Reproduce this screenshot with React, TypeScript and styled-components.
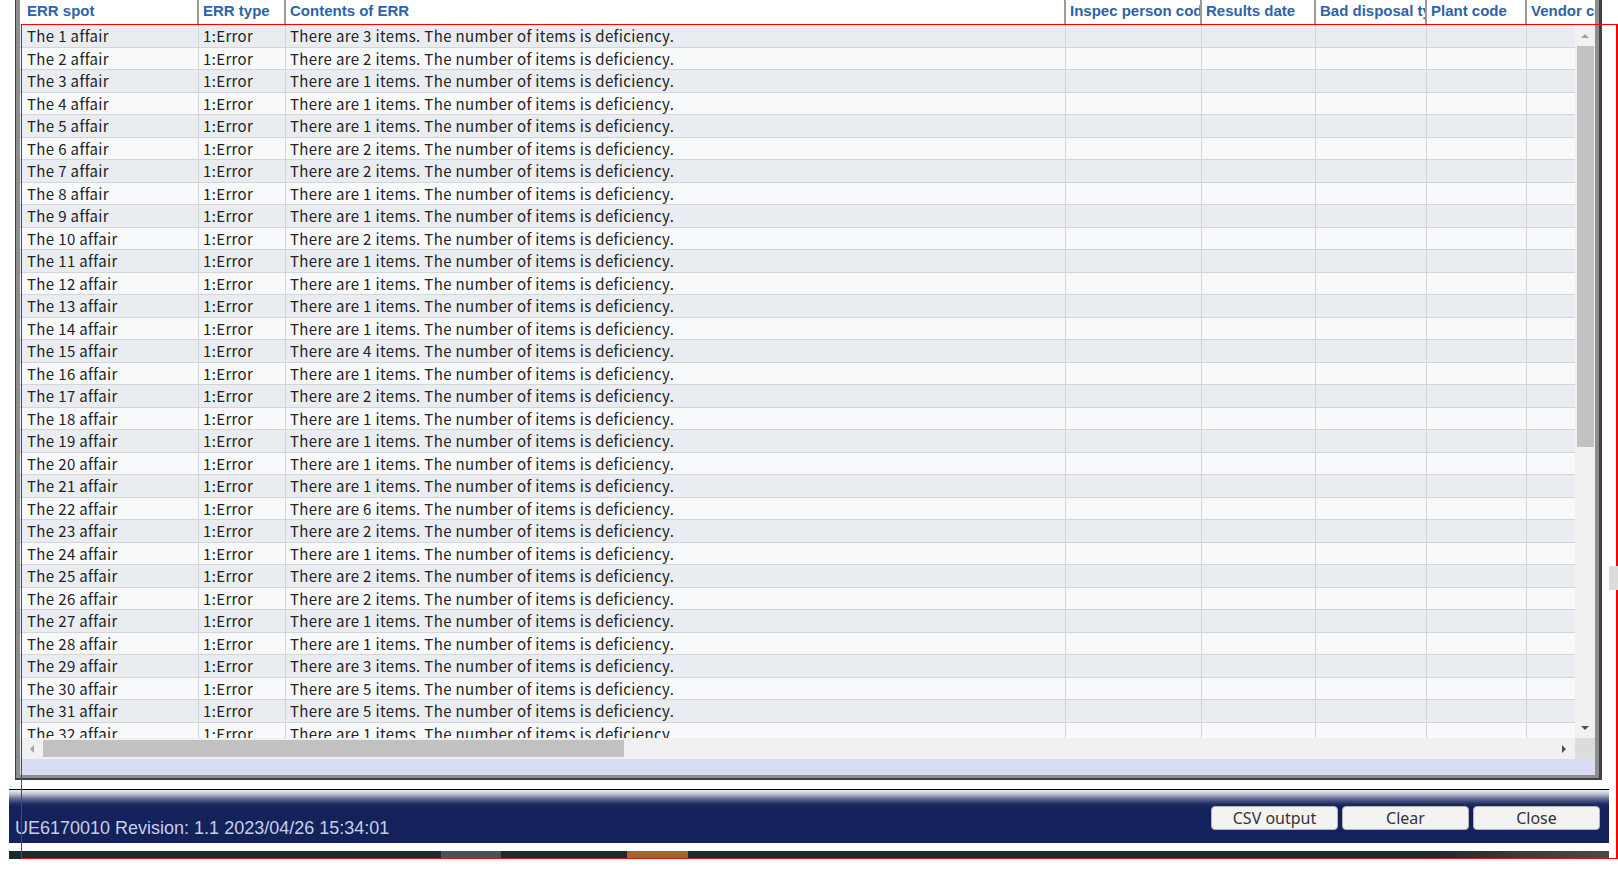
import React from 'react'
import styled, { createGlobalStyle } from 'styled-components'

const GlobalStyle = createGlobalStyle`
  html, body {
    margin: 0;
    padding: 0;
    background: #ffffff;
    overflow: hidden;
  }
`

const columns = [
  { key: 'spot', title: 'ERR spot', width: 179 },
  { key: 'type', title: 'ERR type', width: 87 },
  { key: 'contents', title: 'Contents of ERR', width: 780 },
  { key: 'inspec', title: 'Inspec person code', width: 136 },
  { key: 'results', title: 'Results date', width: 114 },
  { key: 'disposal', title: 'Bad disposal type', width: 111 },
  { key: 'plant', title: 'Plant code', width: 100 },
  { key: 'vendor', title: 'Vendor code', width: 110 },
  { key: 'extra', title: 'Item code', width: 120 },
]

// item counts of the rows that fit in the visible part of the list
const counts = [
  3, 2, 1, 1, 1, 2, 2, 1, 1, 2, 1, 1, 1, 1, 4, 1, 2, 1, 1, 1, 1, 6, 2, 1, 2, 2,
  1, 1, 3, 5, 5, 1,
]

const Page = styled.div`
  position: relative;
  width: 1618px;
  height: 885px;
  overflow: hidden;
  background: #ffffff;
`

const Frame = styled.div`
  margin-left: 15px;
  width: 1587px;
  box-sizing: border-box;
  border-left: 1px solid #404040;
  border-right: 3px solid #404040;
  border-bottom: 2px solid #404040;
`

const FrameInner = styled.div`
  border-left: 4px solid #8d8d8d;
  border-right: 4px solid #8d8d8d;
  border-bottom: 3px solid #8d8d8d;
  background: #ffffff;
`

const HeaderRow = styled.div`
  display: flex;
  height: 25px;
  box-sizing: border-box;
  border-bottom: 1px solid #cccccc;
  overflow: hidden;
  background: #ffffff;
`

const HeadCell = styled.div<{ $w: number }>`
  flex: none;
  width: ${(p) => p.$w}px;
  box-sizing: border-box;
  border-right: 2px solid #9b9b9b;
  padding-left: 4px;
  font-family: 'Liberation Sans', Arial, sans-serif;
  font-weight: bold;
  font-size: 15px;
  line-height: 22px;
  color: #2f63a8;
  white-space: nowrap;
  overflow: hidden;
  &:first-child {
    padding-left: 7px;
  }
`

const ScrollArea = styled.div`
  display: grid;
  grid-template-columns: 1fr 20px;
  grid-template-rows: 713px 21px;
`

const Body = styled.div`
  overflow: hidden;
`

const Row = styled.div<{ $odd: boolean }>`
  display: flex;
  height: 22.5px;
  box-sizing: border-box;
  border-bottom: 1px solid #d5d5d5;
  background: ${(p) => (p.$odd ? '#e9edf1' : '#f8f9fb')};
`

const Cell = styled.div<{ $w: number }>`
  flex: none;
  width: ${(p) => p.$w}px;
  box-sizing: border-box;
  border-right: 1px solid #d5d5d5;
  padding-left: 4px;
  font-family: 'Noto Sans CJK JP', 'Noto Sans', sans-serif;
  font-size: 15px;
  line-height: 21px;
  letter-spacing: 0.36px;
  color: #222222;
  white-space: nowrap;
  overflow: hidden;
  &:first-child {
    padding-left: 7px;
  }
`

const VScroll = styled.div`
  display: flex;
  flex-direction: column;
  align-items: center;
  background: #f1f1f1;
`

const HScroll = styled.div`
  display: flex;
  align-items: center;
  background: #f1f1f1;
`

const ArrowBox = styled.div<{ $size: number; $vertical?: boolean }>`
  flex: none;
  display: flex;
  align-items: center;
  justify-content: center;
  ${(p) => (p.$vertical ? `height: ${p.$size}px; width: 100%;` : `width: ${p.$size}px; height: 100%;`)}
`

const Triangle = styled.div<{ $dir: 'up' | 'down' | 'left' | 'right'; $dark?: boolean }>`
  width: 0;
  height: 0;
  ${(p) => {
    const c = p.$dark ? '#505050' : '#a3a3a3'
    if (p.$dir === 'up')
      return `border-left: 4.5px solid transparent; border-right: 4.5px solid transparent; border-bottom: 4px solid ${c};`
    if (p.$dir === 'down')
      return `border-left: 4.5px solid transparent; border-right: 4.5px solid transparent; border-top: 4px solid ${c};`
    if (p.$dir === 'left')
      return `border-top: 4px solid transparent; border-bottom: 4px solid transparent; border-right: 4px solid ${c};`
    return `border-top: 4px solid transparent; border-bottom: 4px solid transparent; border-left: 4px solid ${c};`
  }}
`

const VThumb = styled.div`
  flex: none;
  width: 17px;
  height: 401px;
  background: #c1c1c1;
`

const HThumb = styled.div`
  flex: none;
  width: 581px;
  height: 17px;
  background: #c1c1c1;
`

const Spacer = styled.div`
  flex: 1;
`

const Corner = styled.div`
  background: #dcdcdc;
`

const StatusStrip = styled.div`
  height: 16px;
  background: #dadcf1;
`

const Footer = styled.div`
  margin-top: 9px;
  margin-left: 9px;
  width: 1600px;
  height: 53px;
  border-top: 1px solid #000000;
  display: flex;
  justify-content: space-between;
  align-items: flex-end;
  background: linear-gradient(
    to bottom,
    #eef0f4 0px,
    #bcc1d3 4px,
    #5d6890 9px,
    #1d2c63 14px,
    #13225b 17px,
    #13225b 100%
  );
`

const FooterText = styled.div`
  padding: 0 0 5px 6px;
  font-family: 'Liberation Sans', Arial, sans-serif;
  font-size: 18px;
  line-height: 20px;
  color: #c9cdea;
  white-space: nowrap;
`

const ButtonRow = styled.div`
  display: flex;
  gap: 4px;
  padding: 0 9px 13px 0;
`

const Button = styled.button`
  width: 127px;
  height: 24px;
  padding: 0;
  box-sizing: border-box;
  border: 1px solid #b3b3b3;
  border-radius: 4px;
  background: #f3f3f3;
  font-family: 'Noto Sans', 'Open Sans', sans-serif;
  font-size: 16px;
  line-height: 22px;
  color: #333333;
  cursor: pointer;
`

const Taskbar = styled.div`
  display: flex;
  margin-top: 8px;
  margin-left: 9px;
  width: 1600px;
  height: 8px;
  background: linear-gradient(
    to right,
    #1c292d 0px,
    #1c292d 1420px,
    #3b3735 1500px,
    #4a4a4a 1600px
  );
`

const TaskSlot = styled.div<{ $left: number; $w: number; $color: string }>`
  flex: none;
  margin-left: ${(p) => p.$left}px;
  width: ${(p) => p.$w}px;
  background: ${(p) => p.$color};
`

const Highlight = styled.div`
  position: absolute;
  left: 21px;
  top: 24px;
  width: 1597px;
  height: 835px;
  box-sizing: border-box;
  border-top: 1px solid #ff0000;
  border-left: 1px solid #ff0000;
  border-right: 2px solid #ff0000;
  border-bottom: 1px solid #e01010;
  pointer-events: none;
`

const PageNub = styled.div`
  position: absolute;
  right: 0;
  top: 566px;
  width: 9px;
  height: 24px;
  background: #dcdcdc;
`

const ErrorList: React.FC = () => {
  return (
    <FrameInner>
      <HeaderRow>
        {columns.map((col) => (
          <HeadCell key={col.key} $w={col.width}>
            {col.title}
          </HeadCell>
        ))}
      </HeaderRow>
      <ScrollArea>
        <Body>
          {counts.map((n, i) => (
            <Row key={i} $odd={i % 2 === 0}>
              <Cell $w={columns[0].width}>The {i + 1} affair</Cell>
              <Cell $w={columns[1].width}>1:Error</Cell>
              <Cell $w={columns[2].width}>
                There are {n} items. The number of items is deficiency.
              </Cell>
              {columns.slice(3).map((col) => (
                <Cell key={col.key} $w={col.width} />
              ))}
            </Row>
          ))}
        </Body>
        <VScroll>
          <ArrowBox $size={21} $vertical>
            <Triangle $dir='up' />
          </ArrowBox>
          <VThumb />
          <Spacer />
          <ArrowBox $size={21} $vertical>
            <Triangle $dir='down' $dark />
          </ArrowBox>
        </VScroll>
        <HScroll>
          <ArrowBox $size={23}>
            <Triangle $dir='left' />
          </ArrowBox>
          <HThumb />
          <Spacer />
          <ArrowBox $size={23}>
            <Triangle $dir='right' $dark />
          </ArrowBox>
        </HScroll>
        <Corner />
      </ScrollArea>
      <StatusStrip />
    </FrameInner>
  )
}

const App: React.FC = () => {
  return (
    <Page>
      <GlobalStyle />
      <Frame>
        <ErrorList />
      </Frame>
      <Footer>
        <FooterText>UE6170010 Revision: 1.1 2023/04/26 15:34:01</FooterText>
        <ButtonRow>
          <Button type='button'>CSV output</Button>
          <Button type='button'>Clear</Button>
          <Button type='button'>Close</Button>
        </ButtonRow>
      </Footer>
      <Taskbar>
        <TaskSlot $left={432} $w={60} $color='#47525a' />
        <TaskSlot $left={126} $w={61} $color='#a4652c' />
      </Taskbar>
      <Highlight />
      <PageNub />
    </Page>
  )
}

export default App
